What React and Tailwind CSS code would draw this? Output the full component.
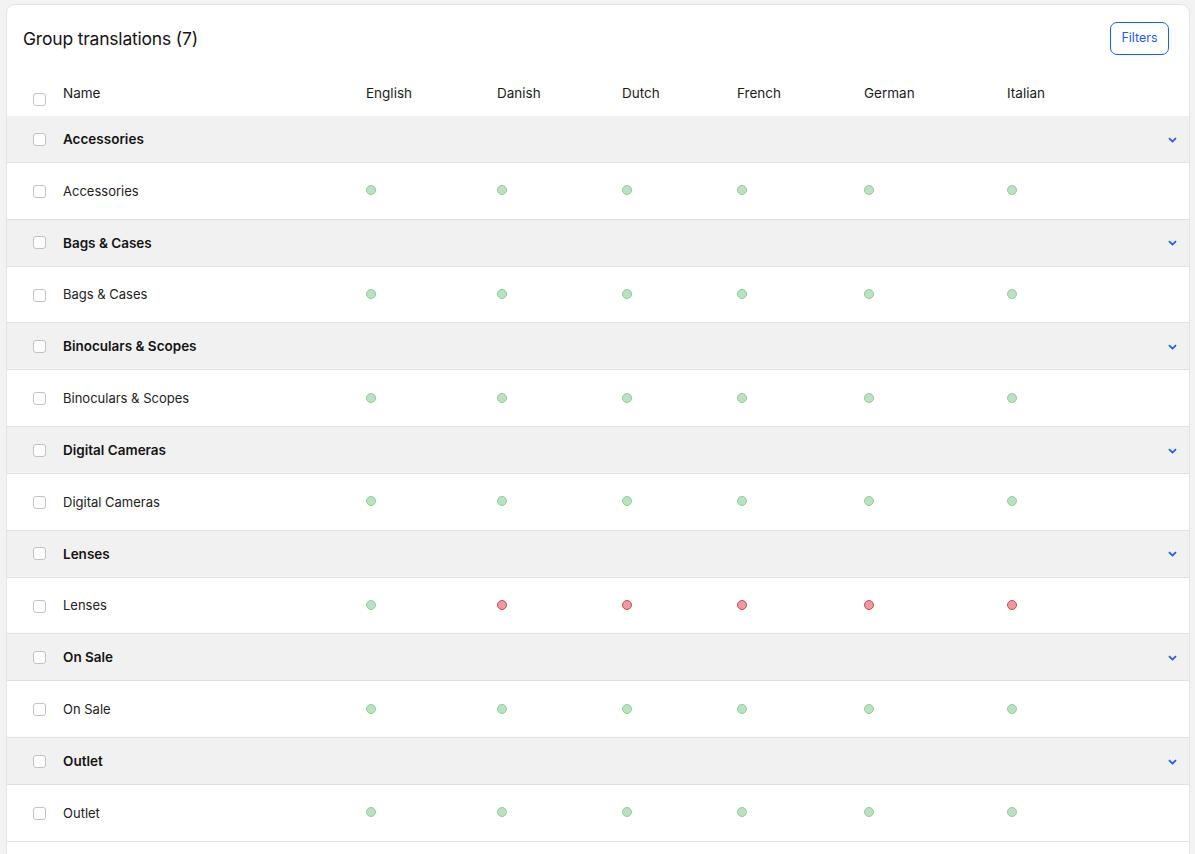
import React from "react";

const langs = ["English", "Danish", "Dutch", "French", "German", "Italian"];
const groups = [
  { name: "Accessories", status: [1, 1, 1, 1, 1, 1] },
  { name: "Bags & Cases", status: [1, 1, 1, 1, 1, 1] },
  { name: "Binoculars & Scopes", status: [1, 1, 1, 1, 1, 1] },
  { name: "Digital Cameras", status: [1, 1, 1, 1, 1, 1] },
  { name: "Lenses", status: [1, 0, 0, 0, 0, 0] },
  { name: "On Sale", status: [1, 1, 1, 1, 1, 1] },
  { name: "Outlet", status: [1, 1, 1, 1, 1, 1] },
];

const gridCols = "grid grid-cols-[55px_303px_131px_125px_115px_127px_143px_1fr]";

function Box({ className = "" }) {
  return (
    <span
      className={`block w-[13px] h-[13px] rounded-[3px] border border-[#c2c2c2] bg-white ml-[25px] ${className}`}
    />
  );
}

function Dot({ ok }) {
  return ok ? (
    <span className="block w-[10px] h-[10px] rounded-full bg-[#b8e3be] border border-[#8ecf99]" />
  ) : (
    <span className="block w-[10px] h-[10px] rounded-full bg-[#ec9b9f] border border-[#d2474f]" />
  );
}

function Chevron() {
  return (
    <svg width="9" height="6" viewBox="0 0 9 6" className="text-[#1f5bff]">
      <path d="M1 1.2 L4.5 4.6 L8 1.2" fill="none" stroke="currentColor" strokeWidth="1.8" />
    </svg>
  );
}

export default function App() {
  return (
    <div
      className="min-h-[854px] bg-[#f3f3f3] pt-[4px] pl-[6px] pr-[5px] overflow-hidden text-[#1b1b1b]"
      style={{ fontFamily: "Inter, 'Noto Sans', sans-serif" }}
    >
      <div className="bg-white border border-[#e4e4e4] rounded-t-[9px] h-[860px]">
        <div className="flex items-center justify-between pl-[16px] pr-[20px] h-[66px]">
          <h1 className="text-[17.5px] font-normal tracking-[-0.2px] text-[#141414] pt-[3px]">Group translations (7)</h1>
          <button className="h-[33px] w-[59px] border-[1.5px] border-[#1a5cff] rounded-[7px] text-[12.5px] text-[#1a5cff] bg-white">
            Filters
          </button>
        </div>
        <div className={`${gridCols} h-[45px] items-center text-[13.5px] text-[#1b1b1b] pl-[1px]`}>
          <div className="pt-[12px]">
            <Box />
          </div>
          <div className="-mt-[1px]">Name</div>
          {langs.map((l) => (
            <div key={l} className="-mt-[1px]">{l}</div>
          ))}
        </div>
        {groups.map((g) => (
          <React.Fragment key={g.name}>
            <div className={`${gridCols} h-[47px] items-center bg-[#f1f1f1] border-b border-[#e0e0e6] text-[13.5px] font-semibold text-[#141414] pl-[1px]`}>
              <div>
                <Box />
              </div>
              <div>{g.name}</div>
              <div className="col-span-5" />
              <div className="flex justify-end pr-[12px] pt-[1px]">
                <Chevron />
              </div>
            </div>
            <div className={`${gridCols} h-[56.7px] items-center bg-white border-b border-[#e0e0e6] text-[13px] text-[#222] pl-[1px]`}>
              <div className="pt-[1px]">
                <Box />
              </div>
              <div className="pt-[1px]">{g.name}</div>
              {g.status.map((s, i) => (
                <div key={i} className="-mt-[1px]">
                  <Dot ok={s === 1} />
                </div>
              ))}
            </div>
          </React.Fragment>
        ))}
      </div>
    </div>
  );
}
